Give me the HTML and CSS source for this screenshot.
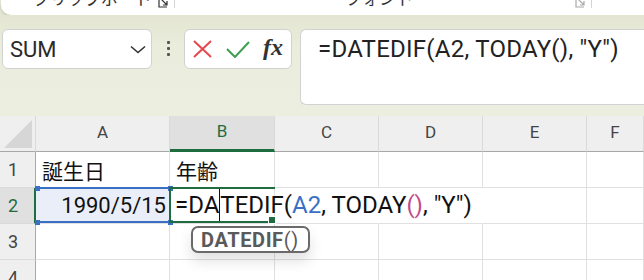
FILE: index.html
```html
<!DOCTYPE html>
<html lang="ja">
<head>
    <meta charset="UTF-8">
    <title>Excel - DATEDIF</title>
    <link rel="stylesheet" href="styles.css">
</head>
<body>

    <!-- Ribbon (bottom edge only) -->
    <div class="ribbon">
        <div class="ribbon-group clipboard">
            <span class="group-label">クリップボード</span>
            <svg class="launcher" width="11" height="9" viewBox="0 0 11 9">
                <path d="M1 0 V8 H9 M3 0 L9 6 M9 2 V6 H5" fill="none" stroke="#333" stroke-width="1.2"/>
            </svg>
        </div>
        <div class="ribbon-group font">
            <span class="group-label">フォント</span>
            <svg class="launcher" width="11" height="9" viewBox="0 0 11 9">
                <path d="M1 0 V8 H9 M3 0 L9 6 M9 2 V6 H5" fill="none" stroke="#aaa" stroke-width="1.2"/>
            </svg>
        </div>
    </div>

    <!-- Formula bar -->
    <div class="formula-area">
        <div class="name-box">
            <span>SUM</span>
            <svg width="16" height="9" viewBox="0 0 16 9">
                <path d="M1 1.5 L8 7.5 L15 1.5" fill="none" stroke="#333" stroke-width="1.6"/>
            </svg>
        </div>
        <div class="kebab"><i></i><i></i><i></i></div>
        <div class="fx-box">
            <svg width="19" height="18" viewBox="0 0 19 18">
                <path d="M1 1 L18 17 M18 1 L1 17" stroke="#e5484d" stroke-width="2"/>
            </svg>
            <svg width="24" height="17" viewBox="0 0 24 17">
                <path d="M1 8 L9 16 L23 1" fill="none" stroke="#3d9f4f" stroke-width="2"/>
            </svg>
            <span class="fx">fx</span>
        </div>
        <div class="formula-input">=DATEDIF(A2, TODAY(), "Y")</div>
    </div>

    <!-- Sheet -->
    <div class="sheet">
        <div class="corner"><span class="corner-tri"></span></div>
        <div class="col-head">A</div>
        <div class="col-head active">B</div>
        <div class="col-head">C</div>
        <div class="col-head">D</div>
        <div class="col-head">E</div>
        <div class="col-head">F</div>

        <div class="row-head">1</div>
        <div class="cell">誕生日</div>
        <div class="cell">年齢</div>
        <div class="cell"></div>
        <div class="cell"></div>
        <div class="cell"></div>
        <div class="cell"></div>

        <div class="row-head active">2</div>
        <div class="cell ref">1990/5/15</div>
        <div class="cell editing"></div>
        <div class="cell no-line"></div>
        <div class="cell no-line"></div>
        <div class="cell"></div>
        <div class="cell"></div>

        <div class="row-head">3</div>
        <div class="cell"></div>
        <div class="cell"></div>
        <div class="cell"></div>
        <div class="cell"></div>
        <div class="cell"></div>
        <div class="cell"></div>

        <div class="row-head">4</div>
        <div class="cell"></div>
        <div class="cell"></div>
        <div class="cell"></div>
        <div class="cell"></div>
        <div class="cell"></div>
        <div class="cell"></div>

        <!-- overlays: range highlight, active cell, in-cell edit text, tooltip -->
        <div class="ref-box">
            <i class="h tl"></i><i class="h tr"></i><i class="h bl"></i><i class="h br"></i>
        </div>
        <div class="active-box"><i class="fill-handle"></i></div>
        <div class="edit-text">=DA<span class="caret"></span>TEDIF(<span class="c-ref">A2</span>, TODAY<span class="c-par">()</span>, "Y")</div>
        <div class="tip"><b>DATEDIF</b>()</div>
    </div>

</body>
</html>
```
FILE: styles.css
```css
/* General */
body {
    margin: 0;
    width: 644px;
    height: 280px;
    overflow: hidden;
    background: #e9ebda;
    font-family: Roboto, "Noto Sans CJK JP", sans-serif;
    color: #222;
}

/* Ribbon */
.ribbon {
    display: flex;
    height: 15px;
    margin-left: 1px;
    margin-right: -20px;
    background: #fff;
    border-radius: 0 0 10px 10px;
    box-shadow: 0 2px 4px rgba(120, 125, 90, 0.35);
    overflow: hidden;
}

.ribbon-group {
    position: relative;
    border-right: 1px solid #d4d4d4;
    height: 8px;
}

.ribbon-group.clipboard {
    width: 173px;
}

.ribbon-group.font {
    width: 416px;
}

.group-label {
    position: absolute;
    top: -12px;
    font-family: "Noto Sans CJK JP", sans-serif;
    font-size: 17px;
    line-height: 20px;
    color: #333;
    white-space: nowrap;
}

.clipboard .group-label { left: 32px; }
.font .group-label { left: 170px; }

.launcher {
    position: absolute;
    top: -1px;
    right: 5px;
}

/* Formula bar */
.formula-area {
    display: flex;
    align-items: flex-start;
    height: 101px;
    padding: 14px 0 0 2px;
    box-sizing: border-box;
    background: linear-gradient(#e4e6d2, #eaecdc 30%, #eceee0);
}

.name-box {
    width: 150px;
    height: 40px;
    box-sizing: border-box;
    display: flex;
    align-items: center;
    justify-content: space-between;
    padding: 0 5px 0 7px;
    background: #fff;
    border: 1px solid #d2d2d2;
    border-radius: 6px;
    font-size: 22px;
    color: #2a2a2a;
}

.kebab {
    width: 32px;
    display: flex;
    flex-direction: column;
    align-items: center;
    gap: 3px;
    padding-top: 12px;
}

.kebab i {
    width: 3px;
    height: 3px;
    background: #555;
    border-radius: 1px;
}

.fx-box {
    width: 108px;
    height: 40px;
    box-sizing: border-box;
    display: flex;
    align-items: center;
    padding: 0 0 0 8px;
    gap: 14px;
    background: #fff;
    border: 1px solid #d2d2d2;
    border-radius: 6px;
}

.fx {
    font-family: "Liberation Serif", serif;
    font-style: italic;
    font-weight: bold;
    font-size: 24px;
    color: #333;
    margin-left: -1px;
    margin-top: -3px;
}

.formula-input {
    margin-left: 8px;
    flex: 1;
    height: 76px;
    box-sizing: border-box;
    padding: 4px 0 0 17px;
    background: #fff;
    border: 1px solid #d2d2d2;
    border-right: none;
    border-radius: 6px 0 0 6px;
    font-size: 24px;
    line-height: 30px;
    letter-spacing: 0.25px;
    color: #222;
    white-space: nowrap;
}

/* Sheet grid */
.sheet {
    position: relative;
    display: grid;
    grid-template-columns: 36px 134px 105px 104px 104px 104px 1fr;
    grid-template-rows: 36px 36px 36px 36px 36px;
    background: #fff;
}

.corner,
.col-head,
.row-head {
    box-sizing: border-box;
    background: #efefef;
    color: #444;
    border-right: 1px solid #dadada;
    border-bottom: 1px solid #dadada;
}

.corner {
    border-bottom-color: #a8a8a8;
    position: relative;
}

.corner-tri {
    position: absolute;
    right: 3px;
    bottom: 3px;
    width: 0;
    height: 0;
    border-left: 28px solid transparent;
    border-bottom: 28px solid #d6d6d6;
}

.col-head {
    display: flex;
    align-items: center;
    justify-content: center;
    font-size: 17px;
    border-bottom-color: #a8a8a8;
    padding-bottom: 3px;
}

.col-head.active {
    background: #e0e0e0;
    color: #1e6c3f;
    border-bottom: 3px solid #1e6c3f;
}

.row-head {
    display: flex;
    align-items: center;
    padding-left: 8px;
    font-size: 18px;
    border-right-color: #a8a8a8;
}

.row-head.active {
    background: #e0e0e0;
    color: #1e6c3f;
    border-right: 2px solid #1e6c3f;
}

.cell {
    box-sizing: border-box;
    border-right: 1px solid #e0e0e0;
    border-bottom: 1px solid #e0e0e0;
    padding: 0 6px;
    display: flex;
    align-items: center;
    font-size: 21px;
    color: #111;
    white-space: nowrap;
}

.cell.no-line {
    border-right-color: transparent;
}

.cell.ref {
    background: #e9eef8;
    justify-content: flex-end;
    padding-right: 3px;
    font-size: 22px;
}

/* Overlays */
.ref-box {
    position: absolute;
    left: 36px;
    top: 71px;
    width: 134px;
    height: 36px;
    box-sizing: border-box;
    border-top: 2px solid #3a6fc6;
    border-bottom: 2px solid #3a6fc6;
}

.ref-box .h {
    position: absolute;
    width: 5px;
    height: 5px;
    background: #3a6fc6;
}

.ref-box .tl { left: -1px; top: -3px; }
.ref-box .tr { right: -3px; top: -3px; }
.ref-box .bl { left: -1px; bottom: -4px; }
.ref-box .br { right: -3px; bottom: -4px; }

.active-box {
    position: absolute;
    left: 169px;
    top: 71px;
    width: 106px;
    height: 36px;
    box-sizing: border-box;
    border-top: 2px solid #1e6c3f;
    border-left: 2px solid #1e6c3f;
    border-bottom: 2px solid #1e6c3f;
}

.active-box .fill-handle {
    position: absolute;
    right: 0;
    bottom: -2px;
    width: 6px;
    height: 6px;
    background: #1e6c3f;
    outline: 1px solid #fff;
}

.edit-text {
    position: absolute;
    left: 175px;
    top: 72px;
    height: 34px;
    display: flex;
    align-items: center;
    font-size: 24px;
    color: #111;
    white-space: nowrap;
}

.caret {
    display: inline-block;
    width: 1px;
    height: 32px;
    background: #111;
}

.c-ref {
    color: #3a6fc6;
}

.c-par {
    color: #c24a8c;
}

.tip {
    position: absolute;
    left: 191px;
    top: 110px;
    height: 27px;
    box-sizing: border-box;
    padding: 0 9px 0 8px;
    display: flex;
    align-items: center;
    background: #fff;
    border: 2px solid #6a6a6a;
    border-radius: 7px;
    box-shadow: 0 8px 14px rgba(0, 0, 0, 0.12);
    font-size: 20px;
    letter-spacing: 0.6px;
    color: #5a5a5a;
}

.tip b {
    font-weight: 700;
}
```
